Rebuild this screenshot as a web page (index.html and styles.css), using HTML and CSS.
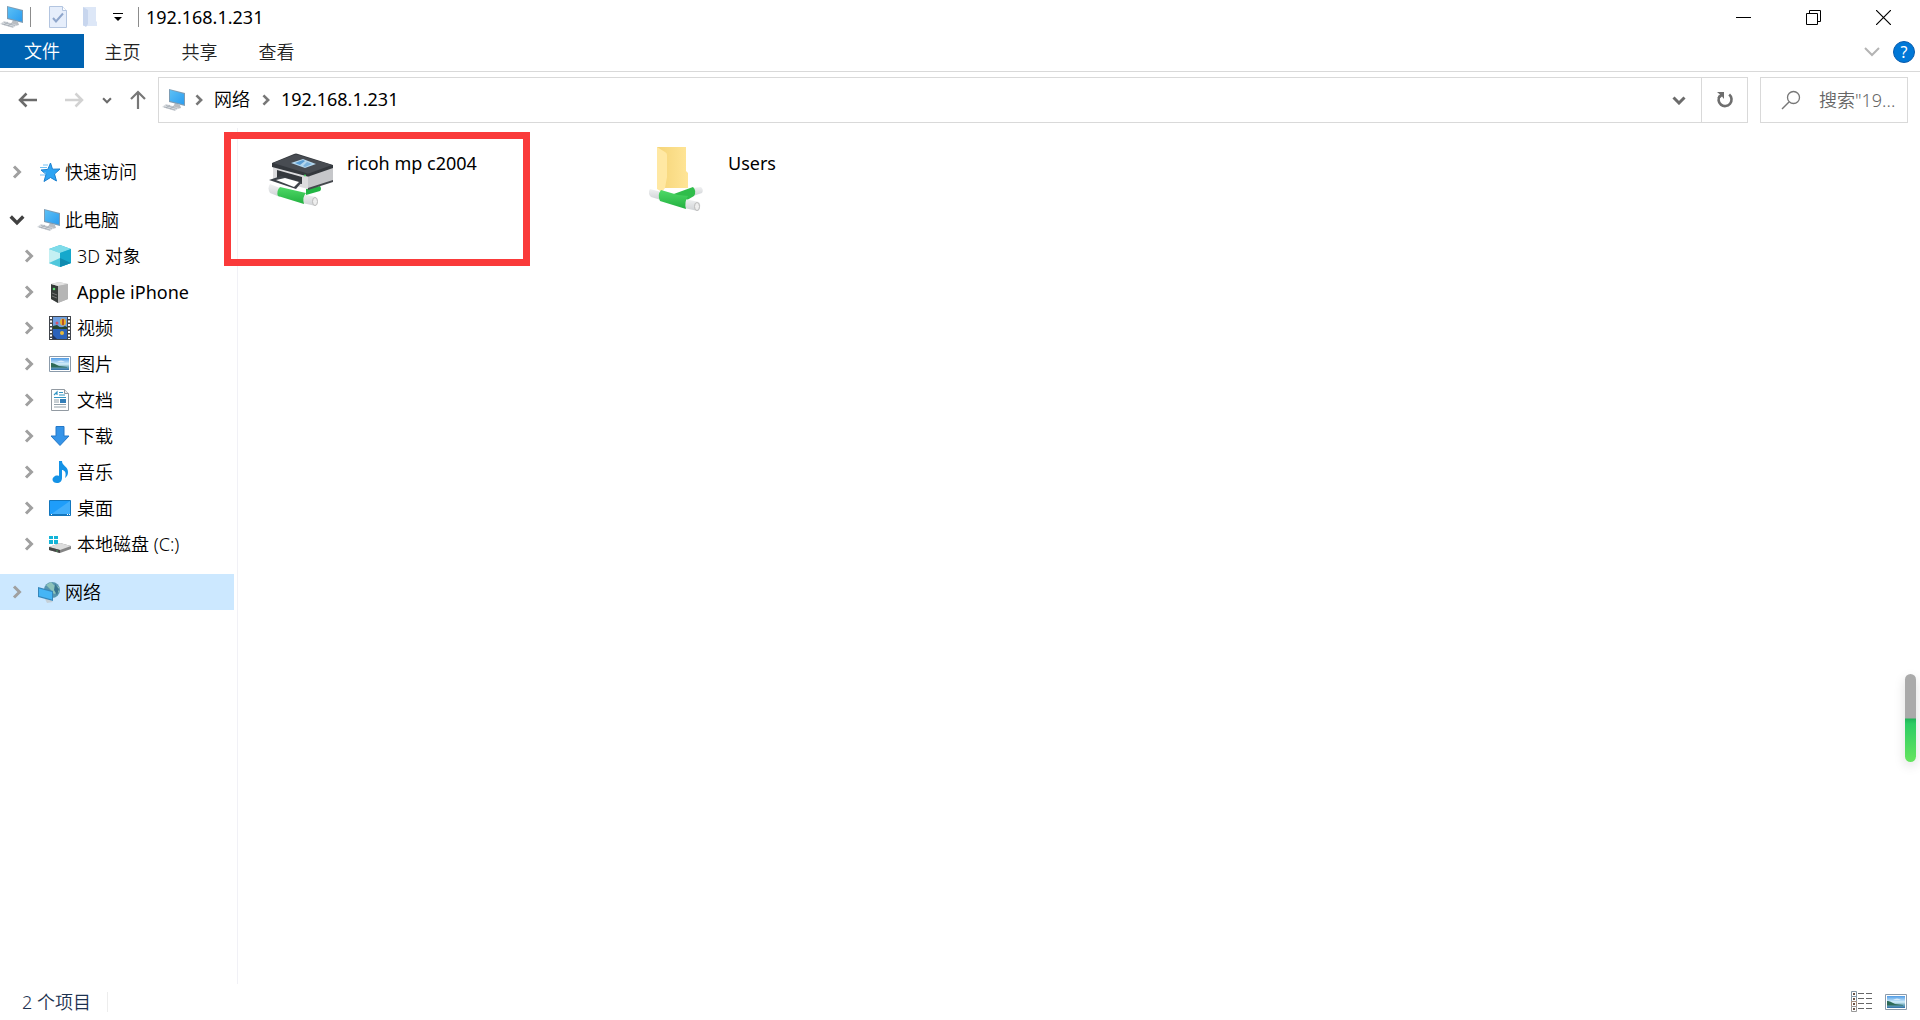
FILE: index.html
```html
<!DOCTYPE html>
<html lang="zh-CN">
<head>
<meta charset="utf-8">
<title>192.168.1.231</title>
<link rel="stylesheet" href="styles.css">
</head>
<body>
<svg class="defs" aria-hidden="true">
  <defs>
    <linearGradient id="screen" x1="0" y1="0" x2="1" y2="1"><stop offset="0" stop-color="#5cc0f5"/><stop offset="1" stop-color="#2b9df0"/></linearGradient>
    <linearGradient id="sky" x1="0" y1="0" x2="0" y2="1"><stop offset="0" stop-color="#4f9be6"/><stop offset=".5" stop-color="#d4effa"/><stop offset=".75" stop-color="#6fa9bd"/><stop offset="1" stop-color="#2f6fa8"/></linearGradient>
    <linearGradient id="pipe" x1="0" y1="0" x2="0" y2="1"><stop offset="0" stop-color="#4fd968"/><stop offset="1" stop-color="#22b03f"/></linearGradient>
    <linearGradient id="tube" x1="0" y1="0" x2="0" y2="1"><stop offset="0" stop-color="#f0f1f2"/><stop offset="1" stop-color="#cfd2d5"/></linearGradient>
    <linearGradient id="fold" x1="0" y1="0" x2="1" y2="0"><stop offset="0" stop-color="#f5d477"/><stop offset="1" stop-color="#ffe597"/></linearGradient>
    <symbol id="pc" viewBox="0 0 24 22">
      <path d="M13 14l5 2 1 3-4 1-4-2z" fill="#b9bdc2"/>
      <path d="M7 0l16 4v13L7 13z" fill="#7d9cb4"/>
      <path d="M8 1l14 4v10.500L8 12z" fill="url(#screen)"/>
      <path d="M0 18l4-3 13 4-4 3z" fill="#d5d9dd"/>
      <path d="M2 18l11 3M4 16.500l11 3M4 19l4-3M8 20l4-3" stroke="#97a0a9" stroke-width=".6"/>
    </symbol>
    <symbol id="picture" viewBox="0 0 22 16">
      <path d="M.5.5h21v15H.5z" fill="#fff" stroke="#8b9bab"/>
      <path d="M2 2h18v12H2z" fill="url(#sky)"/>
      <path d="M2 7c3 0 4 1 8 3l8 1v.500H2z" fill="#2e6b58"/>
      <path d="M8 6q4-3 8 0z" fill="#fff" opacity=".6"/>
    </symbol>
    <symbol id="right" viewBox="0 0 9 14"><path d="M1.500 1.500L7 7l-5.500 5.500" fill="none" stroke="currentColor" stroke-width="3"/></symbol>
    <symbol id="down" viewBox="0 0 14 9"><path d="M1.500 1.500L7 7l5.500-5.500" fill="none" stroke="currentColor" stroke-width="3"/></symbol>
  </defs>
</svg>

<div class="window">
  <header class="titlebar">
    <div class="quickbar">
      <svg class="ic-pc" viewBox="0 0 24 22"><use href="#pc"/></svg>
      <span class="rule"></span>
      <button class="qbtn" aria-label="属性"><svg width="18" height="22" viewBox="0 0 18 22"><path d="M.5.500h13l4 4v17H.5z" fill="#e6eefb" stroke="#b3c5e0"/><path d="M13.500.500v4h4" fill="#fff" stroke="#b3c5e0"/><path d="M4 12l3 3.500 7-8" fill="none" stroke="#8fa6cb" stroke-width="2"/></svg></button>
      <button class="qbtn" aria-label="新建文件夹"><svg width="16" height="22" viewBox="0 0 16 22"><path d="M1 1h13v14l1 1v4H1z" fill="#dde7f7"/><path d="M1 1l5 3v14l-2 3-3-2z" fill="#c8d6ee"/></svg></button>
      <button class="qbtn" aria-label="自定义快速访问工具栏"><svg width="10" height="9" viewBox="0 0 10 9"><path d="M0 0h10v1H0zM1 4h8L5 8z" fill="#000"/></svg></button>
      <span class="rule"></span>
    </div>
    <h1 class="title latin">192.168.1.231</h1>
    <div class="controls">
      <button aria-label="最小化"><svg width="15" height="15" viewBox="0 0 15 15"><path d="M0 7h15v1H0z"/></svg></button>
      <button aria-label="还原"><svg width="15" height="15" viewBox="0 0 15 15"><path d="M.5 3.500h11v11H.5zM3.500 3.500v-3h11v11h-3" fill="none" stroke="#000"/></svg></button>
      <button aria-label="关闭"><svg width="15" height="15" viewBox="0 0 15 15"><path d="M0 0l15 15M15 0L0 15" stroke="#000" stroke-width="1.200"/></svg></button>
    </div>
  </header>

  <nav class="tabs">
    <button class="tab tab-file">文件</button>
    <button class="tab">主页</button>
    <button class="tab">共享</button>
    <button class="tab">查看</button>
    <div class="tabs-end">
      <button aria-label="展开功能区"><svg width="16" height="10" viewBox="0 0 16 10"><path d="M1 1l7 7 7-7" fill="none" stroke="#b4b4b4" stroke-width="2"/></svg></button>
      <button class="help" aria-label="帮助">?</button>
    </div>
  </nav>

  <div class="navbar">
    <div class="history">
      <button aria-label="后退"><svg width="20" height="16" viewBox="0 0 20 16"><path d="M19 8H2M8.500 1.500L2 8l6.500 6.500" fill="none" stroke="#6b6b6b" stroke-width="2.500"/></svg></button>
      <button aria-label="前进"><svg width="20" height="16" viewBox="0 0 20 16"><path d="M1 8h17M11.500 1.500L18 8l-6.500 6.500" fill="none" stroke="#d2d2d2" stroke-width="2.500"/></svg></button>
      <button class="recent" aria-label="最近的位置"><svg width="10" height="7"><use href="#down"/></svg></button>
      <button class="up" aria-label="上移"><svg width="16" height="20" viewBox="0 0 16 20"><path d="M8 19V2M1 9l7-7 7 7" fill="none" stroke="#777" stroke-width="2.200"/></svg></button>
    </div>
    <div class="address">
      <svg class="ic-pc" viewBox="0 0 24 22"><use href="#pc"/></svg>
      <svg class="sep" width="8" height="12"><use href="#right"/></svg>
      <a href="#network">网络</a>
      <svg class="sep" width="8" height="12"><use href="#right"/></svg>
      <a class="latin" href="#host">192.168.1.231</a>
      <button class="drop" aria-label="以前的位置"><svg width="14" height="9"><use href="#down"/></svg></button>
      <button class="refresh" aria-label="刷新"><svg width="18" height="18" viewBox="0 0 18 18"><path d="M13.200 3.600A6.500 6.500 0 1 1 4 4.500" fill="none" stroke="#6e6e6e" stroke-width="2.600"/><path d="M1 1h7v7L6 5.500 3 8 1.500 6.500 4 3.500z" fill="#6e6e6e"/></svg></button>
    </div>
    <label class="search">
      <svg width="20" height="20" viewBox="0 0 20 20"><circle cx="12.500" cy="7.500" r="6" fill="none" stroke="#777" stroke-width="1.300"/><path d="M8 12l-7 7" stroke="#777" stroke-width="1.500"/></svg>
      <input type="search" placeholder='搜索"19...' aria-label="搜索">
    </label>
  </div>

  <div class="body">
    <aside class="tree">
      <a class="node" href="#quick"><svg class="chev"><use href="#right"/></svg>
        <svg class="icon" viewBox="0 0 24 22"><path d="M13.500 2l2 6.200 7.500-.2-5.500 5 2 7-6-3.500-6.500 4 2-7.200L4 9l6.800-.600z" fill="#2da4f3" stroke="#1a7fcf"/><path d="M6 4h5M3 6.500h7M7 12h2M3 14h5" stroke="#74c2f5" stroke-width="1.200"/></svg>快速访问</a>
      <a class="node gap" href="#pc-root"><svg class="chev open"><use href="#down"/></svg>
        <svg class="icon" viewBox="0 0 24 22"><use href="#pc"/></svg>此电脑</a>
      <a class="node sub" href="#objects"><svg class="chev"><use href="#right"/></svg>
        <svg class="icon" viewBox="0 0 22 22"><path d="M11 0l11 4v14l-11 4-11-4V4z" fill="#35bcd8"/><path d="M0 4l11-4 11 4-11 4z" fill="#7fdcea"/><path d="M0 4l11 4v14L0 18z" fill="#c4f0f3"/><path d="M0 18l11-5v9z" fill="#4fc7dc"/><path d="M11 8l11-4v14l-11 4z" fill="#16a8cc"/><path d="M11 13l11 5-11 4z" fill="#108bb0"/></svg>3D 对象</a>
      <a class="node sub latin" href="#iphone"><svg class="chev"><use href="#right"/></svg>
        <svg class="icon" viewBox="0 0 22 22"><path d="M2 3l8-2 9 2v15l-10 4-7-4z" fill="#b9b9b9"/><path d="M2 3l7 2v17l-7-4z" fill="#353a38"/><path d="M2 3l8-2 9 2-10 2z" fill="#e3e3e3"/><path d="M9 5l10-2v15L9 22z" fill="#b5b5b5"/><circle cx="5" cy="8" r="1.300" fill="#5ddc72"/><path d="M3 12l5 2M3 15l5 2" stroke="#777"/></svg>Apple iPhone</a>
      <a class="node sub" href="#videos"><svg class="chev"><use href="#right"/></svg>
        <svg class="icon tall" viewBox="0 0 22 24"><path d="M0 0h22v24H0z" fill="#40444b"/><path d="M4 1h14v10H4z" fill="#6f9fe0"/><path d="M4 12h14v11H4z" fill="#2b62bb"/><path d="M2 1v22M20 1v22" stroke="#fff" stroke-width="2" stroke-dasharray="2 1.500"/><ellipse cx="14" cy="6" rx="3" ry="3.500" fill="#e9b22c"/><path d="M14 3v6" stroke="#ac3425" stroke-width="1.500"/><circle cx="8" cy="7" r="1.500" fill="#d6536b"/><path d="M4 10l4-1 4 3 4-2 2 1v2H4z" fill="#25462f"/><circle cx="13" cy="17" r="2" fill="#e8b93b"/><path d="M4 23v-4l4 4z" fill="#1c3568"/></svg>视频</a>
      <a class="node sub" href="#pictures"><svg class="chev"><use href="#right"/></svg>
        <svg class="icon" viewBox="0 0 22 16"><use href="#picture"/></svg>图片</a>
      <a class="node sub" href="#documents"><svg class="chev"><use href="#right"/></svg>
        <svg class="icon" viewBox="0 0 22 22"><path d="M2.500.500h13l4 4v17h-17z" fill="#fff" stroke="#929aa2"/><path d="M15.500.500v4h4" fill="#eee" stroke="#929aa2"/><path d="M5 6l3-3v3M10 3.500h4M10 6h6M5 8.500h12" fill="none" stroke="#3495c4" stroke-width="1.200"/><path d="M5 11h5M5 13h5M5 15.500h12M5 18h12" stroke="#93a1aa"/><path d="M11 10h6v4h-6z" fill="#357fb9"/></svg>文档</a>
      <a class="node sub" href="#downloads"><svg class="chev"><use href="#right"/></svg>
        <svg class="icon" viewBox="0 0 22 22"><path d="M7 1.500h8v9.500h5l-9 9.500L2 11h5z" fill="#3594e8" stroke="#2478c8"/></svg>下载</a>
      <a class="node sub" href="#music"><svg class="chev"><use href="#right"/></svg>
        <svg class="icon" viewBox="0 0 22 22"><path d="M10 0h3c0 5 6 5 6 11 0 3-1 4-3 6 2-6-1-8-3-8v8c0 3-2 5-5 5-5 0-6-5-2-7 1-.6 3-.6 4 0z" fill="#1492e6"/></svg>音乐</a>
      <a class="node sub" href="#desktop"><svg class="chev"><use href="#right"/></svg>
        <svg class="icon" viewBox="0 0 22 16"><path d="M.5.500h21v15H.5z" fill="#1e9dfa" stroke="#1376bd"/><path d="M1 15L21 1v14z" fill="#41aefb"/><path d="M1 14.500h20" stroke="#1577bd"/><path d="M2 14.500h1M18 14.500h1M20 14.500h1" stroke="#fff"/></svg>桌面</a>
      <a class="node sub" href="#disk-c"><svg class="chev"><use href="#right"/></svg>
        <svg class="icon" viewBox="0 0 22 18"><path d="M0 1h4v3H0zM5 1h4v3H5zM0 5h4v4H0zM5 5h4v4H5z" fill="#13b4d8"/><path d="M0 12l11-4 11 3v3l-11 4-11-3z" fill="#858585"/><path d="M0 12l11-4 11 3-11 4z" fill="#dcdcdc"/><path d="M0 12l11 3v3L0 15z" fill="#464646"/><path d="M8 15.500v1" stroke="#58e070"/></svg>本地磁盘 (C:)</a>
      <a class="node gap selected" href="#network"><svg class="chev"><use href="#right"/></svg>
        <svg class="icon" viewBox="0 0 24 22"><circle cx="15" cy="9" r="8" fill="#5795ae"/><path d="M9 4l5-3 3 3 5 2v5l-5 2-4-5z" fill="#8cc2b9"/><path d="M18 3l4 5-2 6-3-5z" fill="#38748f"/><path d="M8 18h5l3 3-6 1z" fill="#c5d0d8"/><path d="M1 6l15 4v10L1 16z" fill="#3687bb"/><path d="M2 7.500l13 3.500v7.500L2 15z" fill="#45b5f5"/></svg>网络</a>
    </aside>

    <main class="files">
      <a class="file latin" href="#printer">
        <svg class="thumb" viewBox="0 4 68 68">
          <path d="M2 43l10 4v9L2 52q-3-5 0-9z" fill="url(#tube)"/>
          <path d="M38 48l14-3q2 3 0 5l-14 4z" fill="#22b544"/>
          <path d="M34 53l14 3v9l-14-3z" fill="url(#tube)"/><ellipse cx="47" cy="60.500" rx="2.500" ry="4" fill="#eee" stroke="#bbb"/>
          <path d="M12 46l26 6q-4 4-2 11l-26-8q-2-5 2-9z" fill="url(#pipe)"/>
          <path d="M5 24l35 10v14L5 39z" fill="#dcdcde"/><path d="M40 34l25-8v14l-25 8z" fill="#c6c7ca"/><path d="M40 47l25-8v2l-25 8z" fill="#45494e"/>
          <path d="M4 22L26 13q2-1 4 0l35 11v3L42 35q-2 1-4 0L4 26z" fill="#34383d"/><path d="M5 22l21-8q2-1 4 0l34 10-22 8q-2 1-4 0z" fill="#484c52"/>
          <path d="M23 22l12-4 13 5-11 4z" fill="#b4d7ee"/><path d="M27 22l8-3 2 1-5 4z" fill="#5a9dd3"/><path d="M39 21l5 2-7 3-2-1z" fill="#7bb2dc"/>
          <path d="M9 29l25 7v7L9 37z" fill="#34383d"/><path d="M1 39l12-4 21 6-6 7z" fill="#3e4349"/><path d="M8 39l9-2 14 4-5 5z" fill="#fff"/><circle cx="37" cy="34.500" r="1" fill="#49da65"/>
        </svg>
        <span>ricoh mp c2004</span>
      </a>
      <a class="file latin" href="#users">
        <svg class="thumb" viewBox="0 0 68 68">
          <path d="M8 2h29v24l2 2v15H8z" fill="url(#fold)"/><path d="M8 2l8 5q2 1 2 3v22l-2 11-3 4-5-3z" fill="#ffe8a3"/>
          <path d="M1 44l11 3v8L2 52q-4-4-1-8z" fill="url(#tube)"/><path d="M43 43l9-1q3 3 1 6l-9 3z" fill="url(#tube)"/>
          <path d="M22 50l22-8q4 4 1 9l-12 7z" fill="#30bd4b"/>
          <path d="M36 54l14 3q3 4-1 9l-14-3z" fill="url(#tube)"/><ellipse cx="48" cy="61.500" rx="2.500" ry="4" fill="#eee" stroke="#bbb"/>
          <path d="M12 45l17 5 10 1q-4 6-2 13l-26-8q-3-6 1-11z" fill="url(#pipe)"/>
        </svg>
        <span>Users</span>
      </a>
      <div class="highlight"></div>
    </main>
  </div>

  <footer class="status">
    <span class="count">2 个项目</span>
    <div class="views">
      <button aria-label="详细信息"><svg width="22" height="22" viewBox="0 0 22 22"><path d="M.5.500h5v5h-5zM.5 5.500h5v5h-5z" fill="#fff" stroke="#8597a5"/><path d="M.5 10.500h5v5h-5z" fill="#fff" stroke="#a58d7d"/><path d="M.5 15.500h5v5h-5z" fill="#fff" stroke="#999"/><path d="M2 3h2M2 8h2M2 13h2M2 18h2" stroke="#6c5548" stroke-width="2"/><path d="M7 2.500h6M15 2.500h6M7 7.500h6M15 7.500h6M7 12.500h6M15 12.500h6M7 17.500h6M15 17.500h6" stroke="#666"/></svg></button>
      <button aria-label="大图标"><svg width="22" height="16"><use href="#picture"/></svg></button>
    </div>
  </footer>

  <div class="meter"></div>
</div>
</body>
</html>
```
FILE: styles.css
```css
* { box-sizing: border-box; }

body {
  margin: 0;
  background: #fff;
  color: #000;
  font: 350 18px/24px "Noto Sans", "Noto Sans CJK SC", sans-serif;
}

button {
  display: flex;
  align-items: center;
  justify-content: center;
  padding: 0;
  border: 0;
  background: none;
  color: inherit;
  font: inherit;
}

a { color: inherit; text-decoration: none; }
svg { display: block; flex: none; }
.defs { position: absolute; width: 0; height: 0; }
.latin { font-weight: 400; }

.window {
  position: relative;
  display: flex;
  flex-direction: column;
  min-height: 100vh;
}

/* Title bar */
.titlebar { display: flex; align-items: center; height: 34px; }
.quickbar { display: flex; align-items: center; }
.ic-pc { width: 24px; height: 22px; }
.quickbar .ic-pc { margin-right: 6px; }
.rule { width: 1px; height: 20px; background: #8c8c8c; }
.quickbar .qbtn { width: 28px; height: 28px; }
.quickbar .rule + .qbtn { width: 36px; margin-left: 9px; }
.qbtn + .rule { margin-left: 6px; }
.title { margin: 0 0 0 7px; font-size: 18px; }
.controls { display: flex; margin-left: auto; padding-right: 2px; }
.controls button { width: 70px; height: 32px; }

/* Ribbon tabs */
.tabs { display: flex; height: 38px; border-bottom: 1px solid #d9d9d9; }
.tab { width: 77px; height: 36px; color: #222; }
.tab-file { width: 84px; height: 34px; background: #0063b1; color: #fff; }
.tabs-end { display: flex; align-items: center; gap: 13px; margin-left: auto; padding: 0 5px 2px 0; }
.help {
  width: 22px;
  height: 22px;
  border: 1px solid #0a5cad;
  border-radius: 50%;
  background: #0078d7;
  color: #fff;
  font-size: 16px;
  font-weight: 400;
}

/* Address row */
.navbar { display: flex; align-items: center; height: 56px; padding-right: 12px; }
.history { display: flex; align-items: center; width: 158px; padding-left: 5px; }
.history button { width: 46px; height: 40px; }
.history .recent { width: 22px; color: #6b6b6b; }
.history .up { width: 40px; }
.address {
  display: flex;
  flex: 1;
  align-items: center;
  height: 46px;
  padding-left: 3px;
  border: 1px solid #d9d9d9;
}
.address .sep { margin: 0 11px 0 9px; color: #777; }
.address a { padding-bottom: 2px; }
.address a + .sep { margin-left: 12px; }
.drop { width: 44px; height: 44px; margin-left: auto; color: #6b6b6b; }
.refresh { width: 46px; height: 44px; border-left: 1px solid #d9d9d9; }
.search {
  display: flex;
  align-items: center;
  gap: 18px;
  width: 148px;
  height: 46px;
  margin-left: 12px;
  padding-left: 20px;
  border: 1px solid #d9d9d9;
}
.search input {
  flex: 1;
  min-width: 0;
  padding: 0;
  border: 0;
  outline: 0;
  background: none;
  font: inherit;
  appearance: none;
}
.search input::-webkit-search-cancel-button { display: none; }
.search input::placeholder { color: #666; opacity: 1; }

/* Navigation tree */
.body { display: flex; flex: 1; }
.tree { width: 238px; padding: 26px 3px 0 0; border-right: 1px solid #f1f1f6; }
.node { display: flex; align-items: center; height: 36px; padding-left: 9px; white-space: nowrap; }
.node.sub { padding-left: 21px; }
.node.gap { margin-top: 12px; }
.node.selected { background: #cce8ff; }
.chev { width: 16px; height: 14px; color: #a0a0a0; }
.chev.open { color: #404040; }
.icon { width: 24px; height: 22px; margin: 0 4px 0 12px; }
.sub .icon { width: 22px; margin-right: 6px; }
.sub .icon.tall { height: 24px; }

/* File list */
.files {
  position: relative;
  display: grid;
  flex: 1;
  grid-template-columns: repeat(auto-fill, 381px);
  align-content: start;
  padding: 16px 0 0 30px;
}
.file { display: flex; gap: 11px; height: 76px; }
.thumb { width: 68px; height: 68px; margin-top: 1px; }
.file span { margin-top: 7px; }
.highlight {
  position: absolute;
  top: 4px;
  left: -14px;
  width: 306px;
  height: 134px;
  border: 7px solid #fa3a3a;
}

/* Status bar */
.status { display: flex; align-items: center; height: 36px; padding: 0 13px 0 22px; }
.count { padding-right: 16px; border-right: 1px solid #ededed; color: #1e3250; line-height: 20px; }
.views { display: flex; gap: 12px; margin-left: auto; }

.meter {
  position: absolute;
  top: 674px;
  right: 4px;
  width: 11px;
  height: 88px;
  border-radius: 6px;
  background: linear-gradient(#aaa 0 44px, #20b558 45px, #2dcc63 50px, #66e55f);
  box-shadow: 0 4px 12px #0002;
}
```
